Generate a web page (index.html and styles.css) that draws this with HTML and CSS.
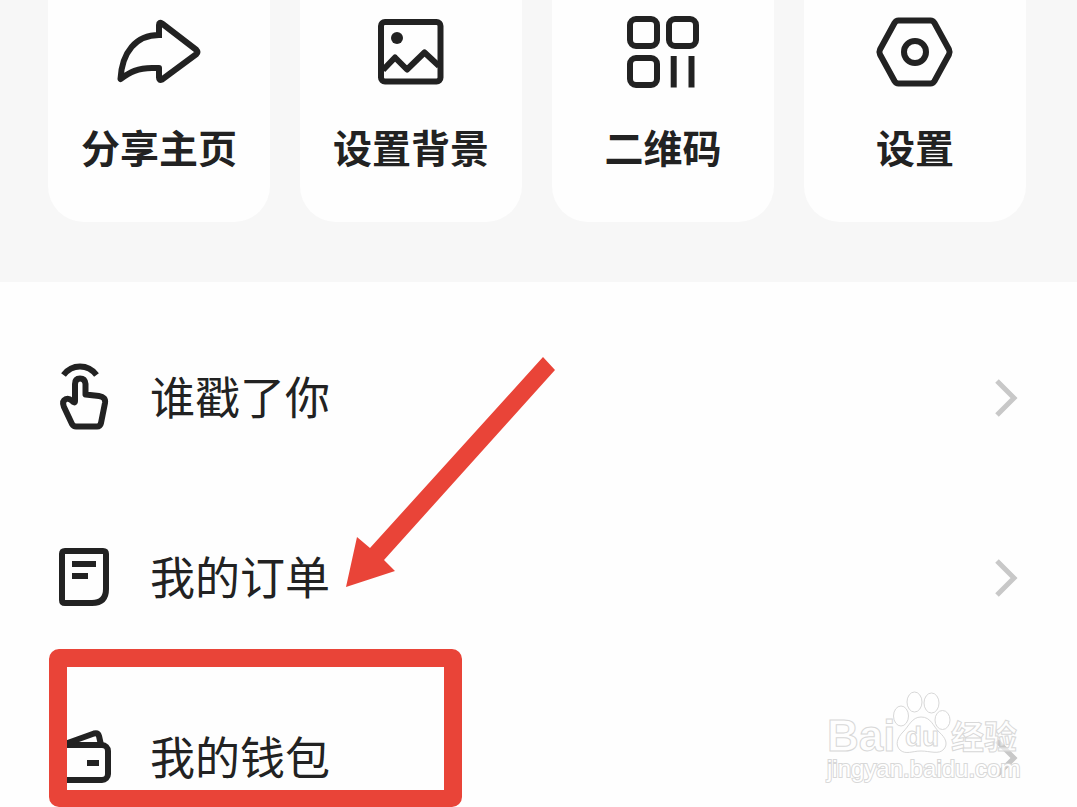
FILE: index.html
```
<!DOCTYPE html>
<html lang="zh-CN">
<head>
    <meta charset="UTF-8">
    <meta name="viewport" content="width=device-width, initial-scale=1.0">
    <title>我的</title>
    <link rel="stylesheet" href="styles.css">
</head>
<body>
    <nav class="tiles">
        <button type="button" class="tile">
            <svg class="tile-icon" viewBox="0 0 96 96" aria-hidden="true">
                <path d="M48 34V21q0-3.500 3-1.500L85.500 46q2 2 0 4L51 75.500q-3 1.500-3-2V64H41C27 64 19 68 9.500 75C11 48 25 31 48 31"/>
            </svg>
            <span>分享主页</span>
        </button>
        <button type="button" class="tile">
            <svg class="tile-icon" viewBox="0 0 96 96" aria-hidden="true">
                <rect x="18" y="18" width="59.500" height="59.500" rx="4"/>
                <path d="M20 66L32 53.500L44 65.500L61.500 48.500L76 62"/>
                <circle class="dot" cx="34" cy="34" r="6"/>
            </svg>
            <span>设置背景</span>
        </button>
        <button type="button" class="tile">
            <svg class="tile-icon" viewBox="0 0 96 96" aria-hidden="true">
                <rect x="15" y="15" width="27" height="27" rx="6"/>
                <rect x="54" y="15" width="27" height="27" rx="6"/>
                <rect x="15" y="54" width="27" height="27" rx="6"/>
                <path d="M58.700 52V83.500M76.500 52V83.500"/>
            </svg>
            <span>二维码</span>
        </button>
        <button type="button" class="tile">
            <svg class="tile-icon" viewBox="0 0 96 96" aria-hidden="true">
                <path d="M31.500 16.500H63.500Q66 16.500 67.500 19L82 45.500Q83.200 48 82 50.500L67.500 77Q66 79.500 63.500 79.500H31.500Q29 79.500 27.500 77L13 50.500Q11.800 48 13 45.500L27.500 19Q29 16.500 31.500 16.500Z"/>
                <circle cx="48" cy="48" r="11"/>
            </svg>
            <span>设置</span>
        </button>
    </nav>

    <main class="menu">
        <a class="row" href="#poke">
            <svg class="row-icon" viewBox="0 0 72 80" aria-hidden="true">
                <path d="M15.500 17Q22 8.500 32 8.500T48.500 17"/>
                <path d="M27 43V26Q27 20.500 32 20.500T37.500 26V36.500L51 38Q58 39 57 45L53 65Q52.200 68.500 49 68.500H28Q25.500 68.500 24 66L16 49Q13.500 43 18 41Q21 40 23.500 42.500Q27 46 27 43Z"/>
            </svg>
            <span class="row-text">谁戳了你</span>
            <svg class="chevron" viewBox="0 0 24 44" aria-hidden="true"><path d="M3 5L20 22L3 39"/></svg>
        </a>
        <a class="row" href="#orders">
            <svg class="row-icon" viewBox="0 0 72 80" aria-hidden="true">
                <path d="M17 13H55Q58 13 58 16V51Q58 65 44 65H17Q14 65 14 62V16Q14 13 17 13Z"/>
                <path d="M24 26H48M24 38H40"/>
            </svg>
            <span class="row-text">我的订单</span>
            <svg class="chevron" viewBox="0 0 24 44" aria-hidden="true"><path d="M3 5L20 22L3 39"/></svg>
        </a>
        <a class="row" href="#wallet">
            <svg class="row-icon" viewBox="0 0 72 80" aria-hidden="true">
                <rect x="12" y="27" width="48" height="35" rx="6"/>
                <path d="M14 27L46 15.500Q50 14.500 51 18L53 27"/>
                <path d="M39 45H51"/>
            </svg>
            <span class="row-text">我的钱包</span>
            <svg class="chevron" viewBox="0 0 24 44" aria-hidden="true"><path d="M3 5L20 22L3 39"/></svg>
        </a>

        <!-- marks drawn over the list -->
        <svg class="arrow" viewBox="0 0 210 232" aria-hidden="true">
            <path d="M197 0L209 13L38 203L49 214L0 230L11 180L24 191Z"/>
        </svg>
        <div class="highlight"></div>
        <svg class="watermark" viewBox="0 0 200 100" role="img" aria-label="Baidu 经验">
            <text class="wm-name" x="2" y="61">Bai</text>
            <ellipse cx="76" cy="26" rx="7.500" ry="10"/>
            <ellipse cx="89.500" cy="12" rx="7.500" ry="10"/>
            <ellipse cx="106.500" cy="13" rx="7.500" ry="10"/>
            <ellipse cx="117.500" cy="30" rx="7.500" ry="9.500"/>
            <path d="M96 27C106 27 108 36 114 42C121 48 123 54 119 59C114 65 105 61 96 61S81 65 75 60C70 55 72 48 78 42C84 36 87 27 96 27Z"/>
            <text class="wm-du" x="80" y="56">du</text>
            <text class="wm-cn" x="126" y="59">经验</text>
            <text class="wm-url" x="2" y="87">jingyan.baidu.com</text>
        </svg>
    </main>
</body>
</html>
```

FILE: styles.css
```
* {
    box-sizing: border-box;
}

body {
    display: flex;
    flex-direction: column;
    margin: 0;
    height: 100vh;
    overflow: hidden;
    background: #fefefe;
    color: #222;
    font-family: "Noto Sans CJK SC", sans-serif;
}

/* top shortcuts */
.tiles {
    display: grid;
    grid-template-columns: repeat(4, 1fr);
    gap: 30px;
    padding: 0 51px 60px 48px;
    background: #f7f7f7;
}

.tile {
    display: flex;
    flex-direction: column;
    align-items: center;
    gap: 17px;
    padding: 4px 0 47px;
    border: 0;
    border-radius: 0 0 36px 36px;
    background: #fefefe;
    color: inherit;
    font: bold 39px/58px "Noto Sans CJK SC", sans-serif;
}

.tile-icon {
    width: 96px;
    height: 96px;
}

.tile-icon,
.row-icon {
    fill: none;
    stroke: #222;
    stroke-width: 6px;
    stroke-linejoin: round;
}

.tile-icon .dot {
    fill: #222;
    stroke: none;
}

/* menu list */
.menu {
    position: relative;
    flex: 1;
    min-height: 0;
    overflow: hidden;
    padding-top: 26px;
}

.row {
    display: flex;
    align-items: center;
    gap: 30px;
    height: 180px;
    padding: 0 59px 0 48px;
    color: inherit;
    text-decoration: none;
}

.row-icon {
    width: 72px;
    height: 80px;
}

.row-text {
    flex: 1;
    padding-bottom: 4px;
    font-size: 45px;
    line-height: 64px;
}

.chevron {
    width: 24px;
    height: 44px;
    fill: none;
    stroke: #c8c8c8;
    stroke-width: 5px;
}

/* overlays */
.arrow {
    position: absolute;
    top: 75px;
    left: 346px;
    width: 210px;
    height: 232px;
    fill: #e94438;
}

.highlight {
    position: absolute;
    top: 367px;
    left: 49px;
    width: 413px;
    height: 158px;
    border: 18px solid #e94438;
    border-bottom-width: 17px;
    border-radius: 10px;
}

.watermark {
    position: absolute;
    top: 408px;
    right: 52px;
    width: 200px;
    height: 100px;
    fill: #fff;
    fill-opacity: .6;
    stroke: #d8d8d8;
    stroke-width: 1px;
    font-family: "Liberation Sans", sans-serif;
}

.wm-name {
    font-size: 44px;
    font-weight: bold;
}

.wm-du {
    font-size: 28px;
    font-weight: bold;
}

.wm-cn {
    font-family: "Noto Sans CJK SC", sans-serif;
    font-size: 33px;
    font-weight: bold;
}

.wm-url {
    fill-opacity: 1;
    stroke-width: 2px;
    paint-order: stroke;
    font-size: 24px;
}
```
